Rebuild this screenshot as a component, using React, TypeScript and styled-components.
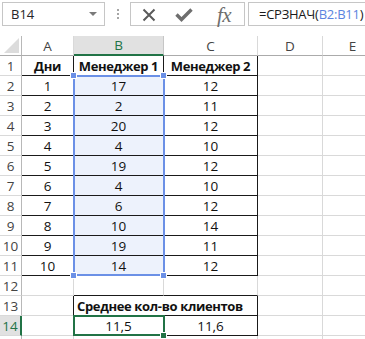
import { Fragment } from 'react';
import styled, { createGlobalStyle, css } from 'styled-components';

const GlobalStyle = createGlobalStyle`
  html, body {
    margin: 0;
    padding: 0;
    background: #ffffff;
    overflow: hidden;
  }
  body {
    font-family: "Open Sans", "Noto Sans", sans-serif;
  }
`;

const GREEN = '#217346';
const BLUE = '#6b90e6';
const GRID = '#d9d9d9';
const DARK = '#1a1a1a';

const Page = styled.div`
  width: 365px;
  height: 339px;
  overflow: hidden;
`;

const Toolbar = styled.div`
  display: flex;
  align-items: stretch;
  height: 24px;
  padding: 2px 0 0 2px;
`;

const NameBox = styled.div`
  box-sizing: border-box;
  flex: 0 0 103px;
  display: flex;
  align-items: center;
  justify-content: space-between;
  padding: 0 7px 0 8px;
  border: 1px solid #c6c6c6;
  font-size: 13px;
  color: #262626;
`;

const DropArrow = styled.span`
  width: 0;
  height: 0;
  border-left: 4px solid transparent;
  border-right: 4px solid transparent;
  border-top: 4px solid #7a7a7a;
`;

const Grip = styled.div`
  flex: 0 0 25px;
  display: flex;
  flex-direction: column;
  align-items: center;
  justify-content: center;
  gap: 2px;

  span {
    width: 2px;
    height: 2px;
    background: #a6a6a6;
  }
`;

const ActionBox = styled.div`
  box-sizing: border-box;
  flex: 0 0 115px;
  display: flex;
  align-items: center;
  padding: 1px 0 0 11px;
  border: 1px solid #c6c6c6;
`;

const IconSlot = styled.div<{ $w: number }>`
  width: ${(p) => p.$w}px;
  display: flex;
  align-items: center;
  justify-content: center;
`;

const Fx = styled.span`
  font-family: "Liberation Serif", "DejaVu Serif", serif;
  font-style: italic;
  font-size: 21px;
  line-height: 20px;
  color: #6e6e6e;
  letter-spacing: -0.5px;
`;

const FormulaBox = styled.div`
  box-sizing: border-box;
  flex: 1 1 auto;
  min-width: 0;
  margin-left: 3px;
  display: flex;
  align-items: center;
  padding-left: 10px;
  border: 1px solid #c6c6c6;
  border-right: none;
  font-size: 13px;
  letter-spacing: -0.25px;
  color: #1a1a1a;
  white-space: nowrap;
`;

const Ref = styled.span`
  color: #5b84e0;
`;

const Sheet = styled.div`
  position: relative;
  margin-top: 10px;
  display: grid;
  grid-template-columns: 22px 52px 90px 94px 65px 60px;
  grid-auto-rows: 20px;
  font-size: 13.5px;
`;

const Corner = styled.div`
  box-sizing: border-box;
  position: relative;
  border-right: 1px solid #b8b8b8;
  border-bottom: 1px solid #ababab;

  &::after {
    content: '';
    position: absolute;
    right: 2px;
    bottom: 2px;
    border-left: 15px solid transparent;
    border-bottom: 15px solid #dcdcdc;
  }
`;

const ColHeader = styled.div<{ $active?: boolean }>`
  box-sizing: border-box;
  display: flex;
  align-items: center;
  justify-content: center;
  border-right: 1px solid ${GRID};
  border-bottom: 1px solid #ababab;
  color: #444444;
  font-size: 13.5px;
  ${(p) =>
    p.$active &&
    css`
      background: #e1e1e1;
      color: ${GREEN};
      border-bottom: 2px solid ${GREEN};
      border-right-color: #c6c6c6;
    `}
`;

const RowHeader = styled.div<{ $active?: boolean }>`
  box-sizing: border-box;
  display: flex;
  align-items: center;
  justify-content: center;
  border-right: 1px solid #b8b8b8;
  border-bottom: 1px solid ${GRID};
  color: #444444;
  font-size: 13.5px;
  padding-top: 1px;
  ${(p) =>
    p.$active &&
    css`
      background: #e1e1e1;
      color: ${GREEN};
      border-right: 2px solid ${GREEN};
    `}
`;

const Cell = styled.div<{
  $bold?: boolean;
  $right?: boolean;
  $bottom?: boolean;
  $span?: number;
  $left?: boolean;
  $fill?: boolean;
}>`
  box-sizing: border-box;
  display: flex;
  align-items: center;
  justify-content: ${(p) => (p.$left ? 'flex-start' : 'center')};
  padding-top: 1px;
  padding-left: ${(p) => (p.$left ? '3px' : '0')};
  border-right: 1px solid ${(p) => (p.$right ? DARK : GRID)};
  border-bottom: 1px solid ${(p) => (p.$bottom ? DARK : GRID)};
  grid-column: span ${(p) => p.$span ?? 1};
  color: #111111;
  white-space: nowrap;
  background: ${(p) => (p.$fill ? '#edf2fc' : 'transparent')};
  ${(p) =>
    p.$bold &&
    css`
      font-weight: 700;
      font-size: 13px;
      letter-spacing: -0.35px;
    `}
`;

const Selection = styled.div<{ $color: string }>`
  position: absolute;
  box-sizing: border-box;
  border: 2px solid ${(p) => p.$color};
  pointer-events: none;
`;

const Handle = styled.div<{ $color: string }>`
  position: absolute;
  width: 5px;
  height: 5px;
  background: ${(p) => p.$color};
  border: 1px solid #ffffff;
`;

type CellSpec = {
  text?: string;
  bold?: boolean;
  right?: boolean;
  bottom?: boolean;
  span?: number;
  left?: boolean;
  fill?: boolean;
};

const m1 = [17, 2, 20, 4, 19, 4, 6, 10, 19, 14];
const m2 = [12, 11, 12, 10, 12, 10, 12, 14, 11, 12];

const rows: CellSpec[][] = [
  [
    { text: 'Дни', bold: true, right: true, bottom: true },
    { text: 'Менеджер 1', bold: true, right: true, bottom: true },
    { text: 'Менеджер 2', bold: true, right: true, bottom: true },
    {},
    {},
  ],
  ...m1.map((v, i) => [
    { text: String(i + 1), right: true, bottom: true },
    { text: String(v), right: true, bottom: true, fill: true },
    { text: String(m2[i]), right: true, bottom: true },
    {},
    {},
  ]),
  [{}, { bottom: true }, { bottom: true }, {}, {}],
  [
    { right: true },
    { text: 'Среднее кол-во клиентов', bold: true, right: true, bottom: true, span: 2, left: true },
    {},
    {},
  ],
  [
    { right: true },
    { text: '11,5', right: true, bottom: true },
    { text: '11,6', right: true, bottom: true },
    {},
    {},
  ],
  [{}, {}, {}, {}, {}],
];

export default function App() {
  return (
    <Page>
      <GlobalStyle />
      <Toolbar>
        <NameBox>
          <span>B14</span>
          <DropArrow />
        </NameBox>
        <Grip>
          <span />
          <span />
          <span />
        </Grip>
        <ActionBox>
          <IconSlot $w={14}>
            <svg width="14" height="14" viewBox="0 0 14 14">
              <path d="M1.5 1.5 L12.5 12.5 M12.5 1.5 L1.5 12.5" stroke="#5a5a5a" strokeWidth="2" fill="none" />
            </svg>
          </IconSlot>
          <IconSlot $w={56}>
            <svg width="18" height="14" viewBox="0 0 18 14">
              <path d="M1.5 6.5 L6.5 11.5 L16.5 1.5" stroke="#6e6e6e" strokeWidth="3.4" fill="none" />
            </svg>
          </IconSlot>
          <IconSlot $w={24}>
            <Fx>fx</Fx>
          </IconSlot>
        </ActionBox>
        <FormulaBox>
          =СРЗНАЧ(<Ref>B2:B11</Ref>)
        </FormulaBox>
      </Toolbar>

      <Sheet>
        <Corner />
        {['A', 'B', 'C', 'D', 'E'].map((l) => (
          <ColHeader key={l} $active={l === 'B'}>
            {l}
          </ColHeader>
        ))}
        {rows.map((row, ri) => (
          <Fragment key={ri}>
            <RowHeader $active={ri + 1 === 14}>{ri < 14 ? ri + 1 : ''}</RowHeader>
            {row.map((c, ci) => (
              <Cell
                key={ci}
                $bold={c.bold}
                $right={c.right}
                $bottom={c.bottom}
                $span={c.span}
                $left={c.left}
                $fill={c.fill}
              >
                {c.text}
              </Cell>
            ))}
          </Fragment>
        ))}

        <Selection $color={BLUE} style={{ left: 73, top: 39, width: 92, height: 201 }} />
        <Handle $color={BLUE} style={{ left: 70, top: 36 }} />
        <Handle $color={BLUE} style={{ left: 160, top: 36 }} />
        <Handle $color={BLUE} style={{ left: 70, top: 236 }} />
        <Handle $color={BLUE} style={{ left: 160, top: 236 }} />

        <Selection $color={GREEN} style={{ left: 73, top: 279, width: 92, height: 21 }} />
        <Handle $color={GREEN} style={{ left: 160, top: 296 }} />
      </Sheet>
    </Page>
  );
}
